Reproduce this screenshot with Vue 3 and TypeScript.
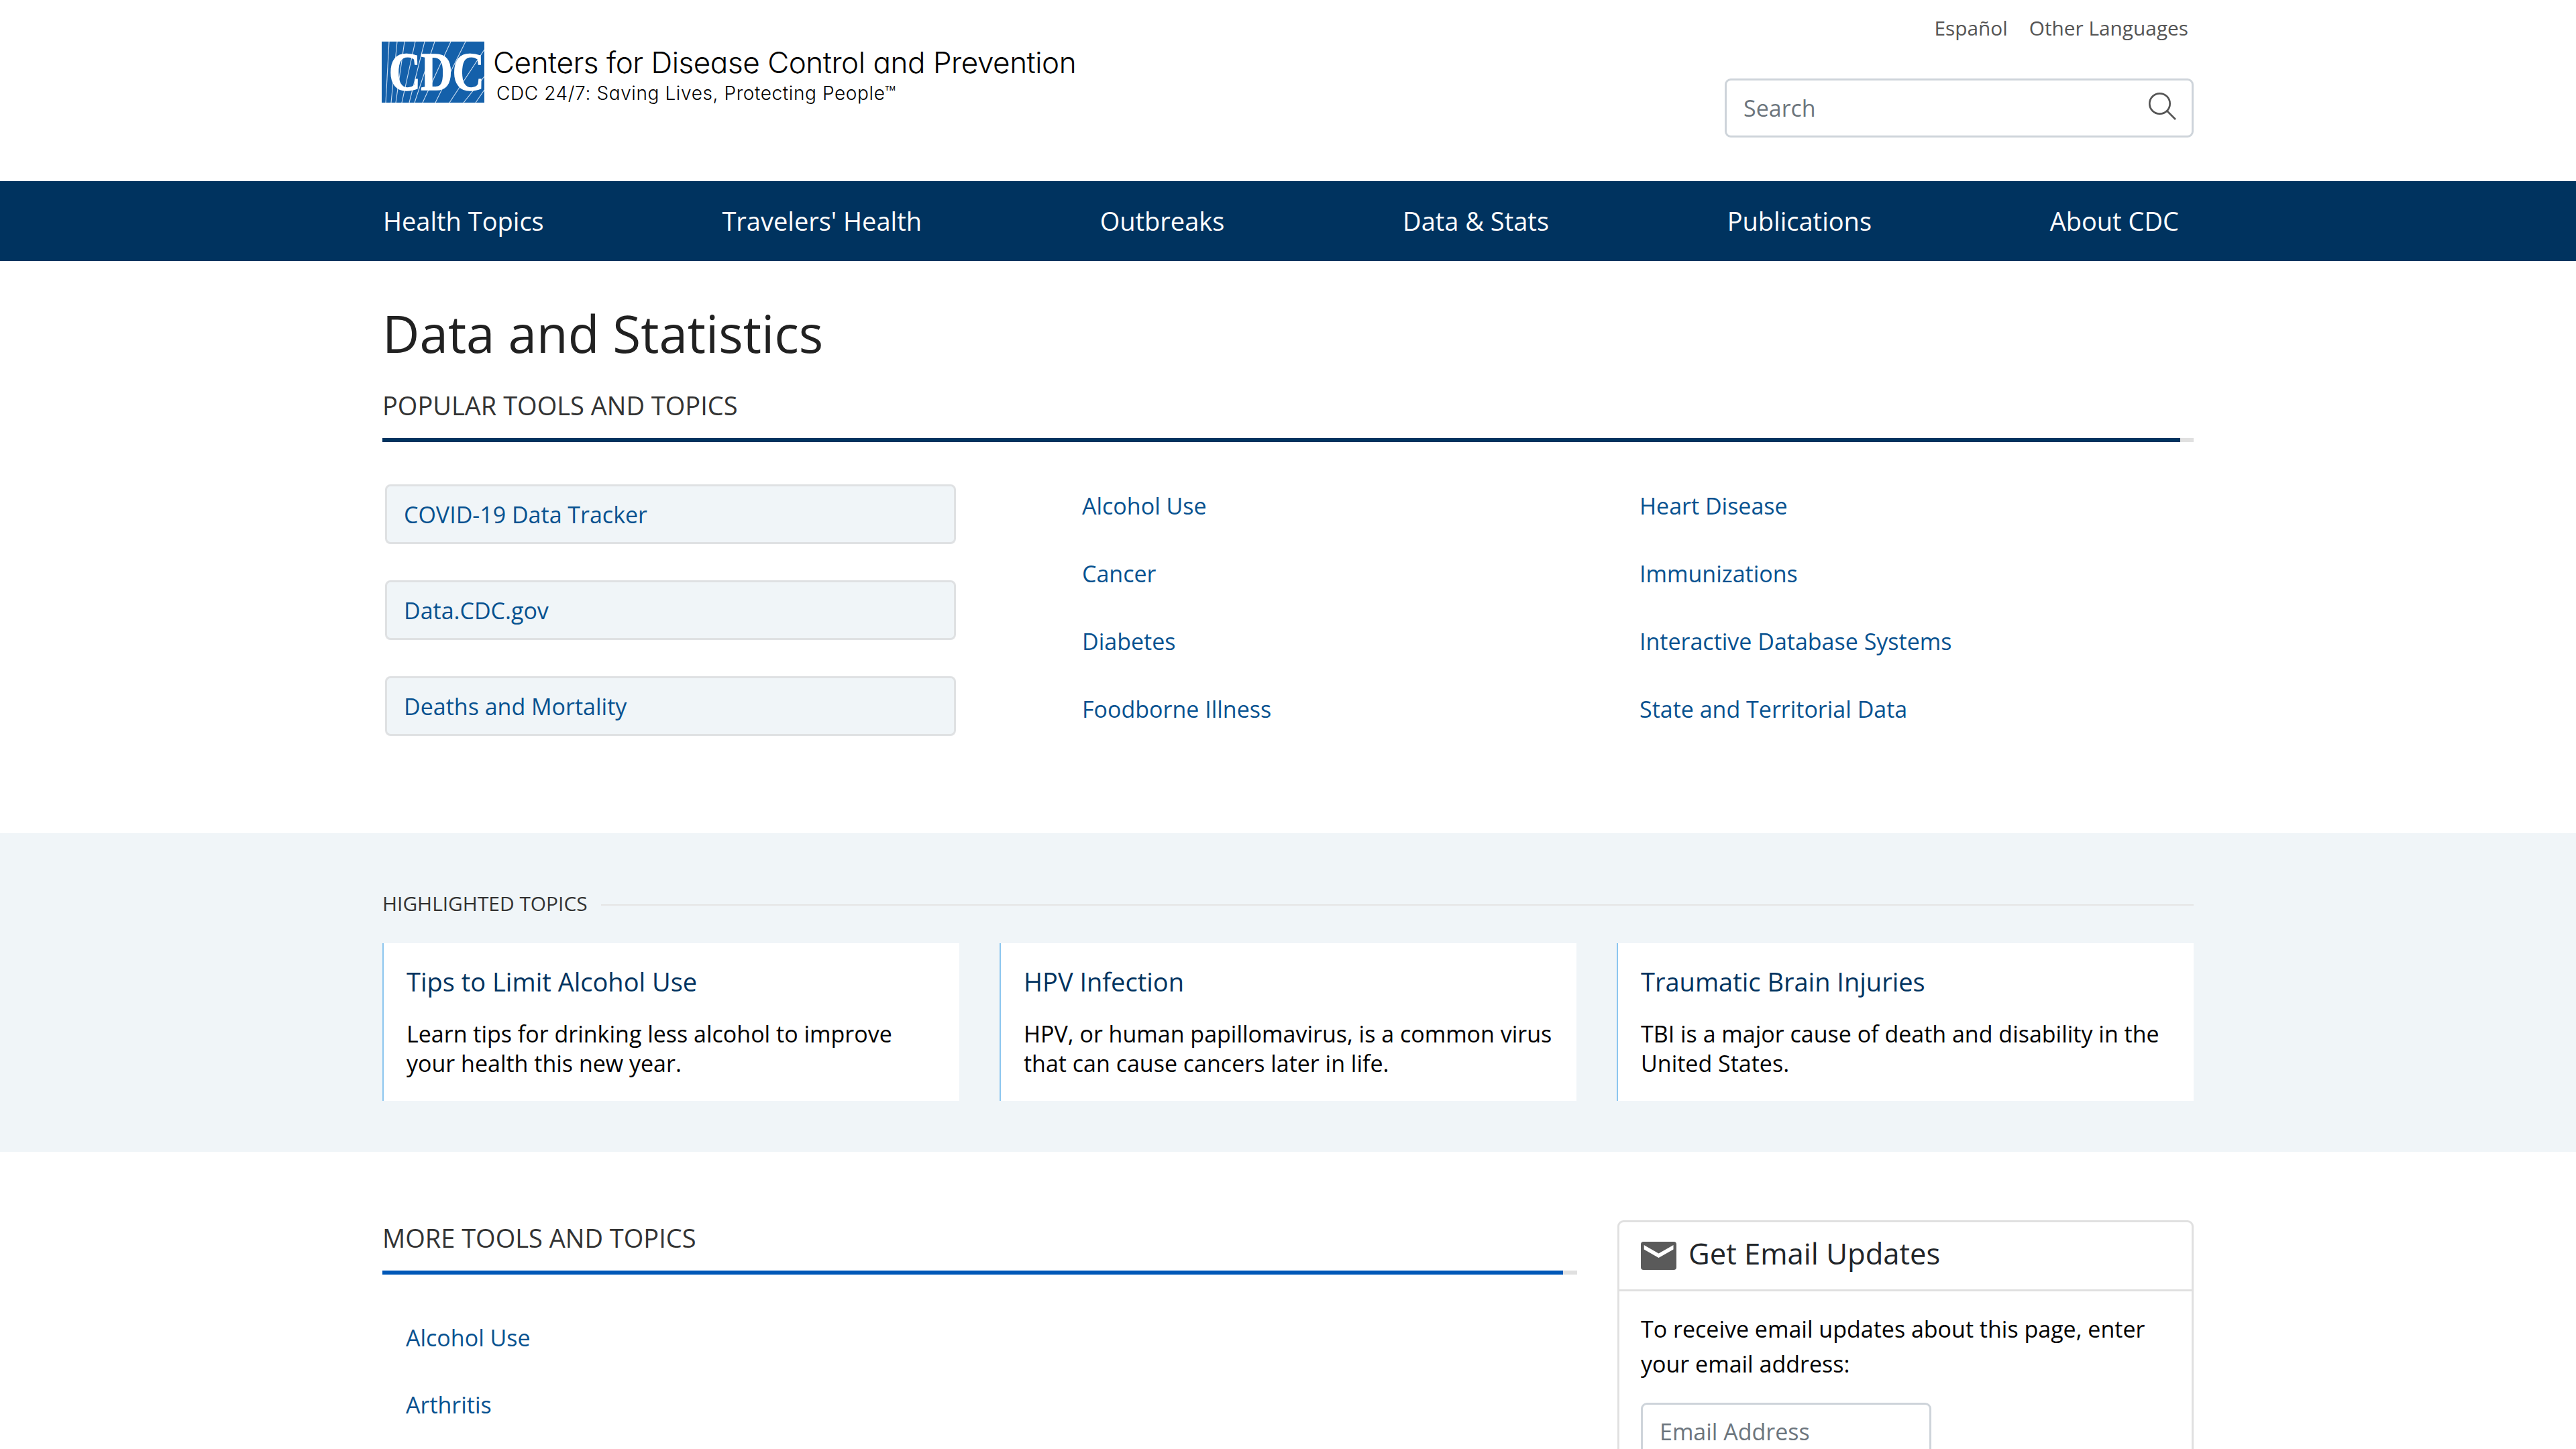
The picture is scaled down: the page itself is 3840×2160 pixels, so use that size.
<script setup lang="ts">
const navItems: string[] = ['Health Topics', "Travelers' Health", 'Outbreaks', 'Data & Stats', 'Publications', 'About CDC']
const pills: string[] = ['COVID-19 Data Tracker', 'Data.CDC.gov', 'Deaths and Mortality']
const colA: string[] = ['Alcohol Use', 'Cancer', 'Diabetes', 'Foodborne Illness']
const colB: string[] = ['Heart Disease', 'Immunizations', 'Interactive Database Systems', 'State and Territorial Data']
const cards = [
  { title: 'Tips to Limit Alcohol Use', text: 'Learn tips for drinking less alcohol to improve your health this new year.' },
  { title: 'HPV Infection', text: 'HPV, or human papillomavirus, is a common virus that can cause cancers later in life.' },
  { title: 'Traumatic Brain Injuries', text: 'TBI is a major cause of death and disability in the United States.' },
]
const moreLinks: string[] = ['Alcohol Use', 'Arthritis']
const rays: number[][] = [
  [6, 91, 11, 0], [14, 91, 23, 0], [21, 91, 34, 0], [30, 91, 50, 0], [41, 91, 64, 0], [49, 91, 79, 0],
  [61, 91, 103, 0], [80, 91, 125, 0], [101, 91, 153, 12], [122, 91, 153, 52], [140, 91, 153, 72],
]
</script>

<template>
  <div class="page">
    <header class="masthead">
      <div class="wrap head-row">
        <div class="logo">
          <div class="mark">
            <svg viewBox="0 0 153 91" width="153" height="91">
              <rect width="153" height="91" fill="#1460aa" />
              <line v-for="(r, i) in rays" :key="i" :x1="r[0]" :y1="r[1]" :x2="r[2]" :y2="r[3]" stroke="#cfe0f2" stroke-width="1.1" />
            </svg>
            <span class="mark-text">CDC</span>
          </div>
          <div class="logo-text">
            <div class="logo-title">Centers for Disease Control and Prevention</div>
            <div class="logo-sub">CDC 24/7: Saving Lives, Protecting People™</div>
          </div>
        </div>
        <div class="head-right">
          <div class="lang">
            <a>Español</a>
            <a>Other Languages</a>
          </div>
          <div class="search">
            <span>Search</span>
            <svg width="46" height="46" viewBox="0 0 46 46" fill="none" stroke="#555" stroke-width="2.7">
              <circle cx="19.5" cy="19.5" r="15.2" />
              <line x1="30.5" y1="30.5" x2="43" y2="43" />
            </svg>
          </div>
        </div>
      </div>
    </header>

    <nav class="nav">
      <div class="wrap nav-row">
        <a v-for="n in navItems" :key="n">{{ n }}</a>
      </div>
    </nav>

    <main>
      <section class="wrap top">
        <h1>Data and Statistics</h1>
        <h2 class="rule-title dark">POPULAR TOOLS AND TOPICS</h2>
        <div class="popular">
          <div class="pills">
            <a v-for="p in pills" :key="p" class="pill">{{ p }}</a>
          </div>
          <ul class="links">
            <li v-for="l in colA" :key="l"><a>{{ l }}</a></li>
          </ul>
          <ul class="links">
            <li v-for="l in colB" :key="l"><a>{{ l }}</a></li>
          </ul>
        </div>
      </section>

      <section class="band">
        <div class="wrap">
          <div class="band-title"><span>HIGHLIGHTED TOPICS</span><i></i></div>
          <div class="cards">
            <article v-for="c in cards" :key="c.title" class="card">
              <h3>{{ c.title }}</h3>
              <p>{{ c.text }}</p>
            </article>
          </div>
        </div>
      </section>

      <section class="wrap lower">
        <div class="more">
          <h2 class="rule-title blue">MORE TOOLS AND TOPICS</h2>
          <ul class="more-links">
            <li v-for="l in moreLinks" :key="l"><a>{{ l }}</a></li>
          </ul>
        </div>
        <aside class="email">
          <div class="email-head">
            <svg width="53" height="42" viewBox="0 0 53 42">
              <rect width="53" height="42" rx="4" fill="#5a5a5a" />
              <path d="M4.7 5 L26.5 17.6 L48.5 5 L48.5 11.6 L26.5 24 L4.7 11.6 Z" fill="#fff" />
            </svg>
            <span>Get Email Updates</span>
          </div>
          <div class="email-body">
            <p>To receive email updates about this page, enter your email address:</p>
            <div class="email-input">Email Address</div>
          </div>
        </aside>
      </section>
    </main>
  </div>
</template>

<style>
html, body { margin: 0; background: #fff; overflow: hidden; }
</style>

<style scoped>
.page {
  height: 2160px;
  overflow: hidden;
  font-family: "Open Sans", sans-serif;
  color: #212529;
  font-size: 34px;
  background: #fff;
}
.wrap { width: 2700px; margin: 0 auto; }
a { text-decoration: none; color: #075290; }
ul { list-style: none; margin: 0; padding: 0; }

.masthead { height: 270px; box-sizing: border-box; }
.head-row { display: flex; justify-content: space-between; align-items: flex-start; }
.logo { display: flex; margin-top: 62px; margin-left: -1px; }
.mark { position: relative; flex: none; width: 153px; height: 91px; }
.mark svg { display: block; }
.mark-text {
  position: absolute; left: -3px; top: 0; width: 153px; text-align: center;
  font-family: "Liberation Serif", serif; font-weight: 700; font-size: 80px; line-height: 91px; color: #fff;
  transform: scaleX(0.82); transform-origin: center; -webkit-text-stroke: 1.5px #fff;
}
.logo-text { margin-left: 13px; color: #000; font-family: Inter, "Liberation Sans", sans-serif; font-weight: 300; font-feature-settings: "cv11" 1; }
.logo-title { font-size: 44px; line-height: 50px; margin-top: 6px; letter-spacing: -0.45px; white-space: nowrap; }
.logo-sub { font-size: 28px; line-height: 34px; margin-top: 4px; margin-left: 5px; letter-spacing: 0.6px; white-space: nowrap; }

.head-right { width: 699px; }
.lang { display: flex; justify-content: flex-end; gap: 32px; padding: 20px 8px 0 0; font-size: 29.8px; line-height: 44px; }
.lang a { color: #555; }
.search {
  margin-top: 53px; height: 88px; box-sizing: border-box; border: 3px solid #ced4da; border-radius: 9px;
  display: flex; align-items: center; justify-content: space-between; padding: 0 21px 0 25px;
  color: #6c757d; font-size: 34px;
}
.search svg { margin-top: -6px; }

.nav { background: #00335f; height: 119px; }
.nav-row { height: 100%; display: flex; justify-content: space-between; align-items: center; padding: 0 22px 2px 1px; box-sizing: border-box; }
.nav-row a { color: #fff; font-size: 38px; }

h1 { font-size: 76.4px; font-weight: 400; line-height: 94px; margin: 0; padding-top: 60px; color: #212121; }
.rule-title { font-size: 38px; font-weight: 400; margin: 0; line-height: 54px; color: #333; }
.rule-title::after { content: ""; display: block; margin-top: 22px; height: 6px; background: linear-gradient(to right, var(--c) calc(100% - var(--tail)), #e0e0e0 calc(100% - var(--tail))); }
.rule-title.dark { --c: #00335f; --tail: 20px; margin-top: 34px; }
.rule-title.blue { --c: #0057b7; --tail: 21px; }

.popular { display: grid; grid-template-columns: 1043px 831px 1fr; margin-top: 63px; }
.pills { display: flex; flex-direction: column; gap: 54px; padding-left: 4px; }
.pill {
  width: 851px; height: 89px; box-sizing: border-box; background: #f0f5f8; border: 3px solid #dfe1e3; border-radius: 8px;
  display: flex; align-items: center; padding: 0 0 0 25px; color: #075290;
}
.links { display: flex; flex-direction: column; gap: 53px; padding-top: 8px; }
.links li { line-height: 48px; }

.band { background: #f0f5f8; height: 475px; margin-top: 145px; padding-top: 85px; box-sizing: border-box; }
.band-title { display: flex; align-items: center; gap: 20px; font-size: 29.9px; line-height: 40px; color: #333; }
.band-title i { flex: 1; height: 2px; background: #e5e5e5; margin-top: 3px; }
.cards { display: grid; grid-template-columns: repeat(3, 860px); gap: 60px; margin-top: 39px; }
.card { background: #fff; height: 235px; box-sizing: border-box; border-left: 2px solid #8cc6ef; padding: 30px 30px 0 34px; }
.card h3 { margin: 0; font-size: 38px; font-weight: 400; line-height: 54px; color: #00335f; }
.card p { margin: 29px 0 0; font-size: 34px; line-height: 44px; color: #000; }

.lower { display: grid; grid-template-columns: 1781px 859px; gap: 60px; padding-top: 102px; }
.more .rule-title { margin-top: -1px; }
.more-links { padding: 0 0 0 35px; margin-top: 70px; display: flex; flex-direction: column; gap: 52px; }
.more-links li { line-height: 48px; }

.email { border: 3px solid #e0e0e0; border-radius: 9px; height: 600px; }
.email-head { height: 100px; border-bottom: 3px solid #e0e0e0; display: flex; align-items: center; padding-left: 32px; gap: 18px; font-size: 43.6px; color: #212529; }
.email-head span { margin-top: -9px; }
.email-body { padding: 30px 32px; }
.email-body p { margin: 0; line-height: 52px; color: #000; }
.email-input {
  margin-top: 32px; width: 433px; height: 88px; box-sizing: border-box; border: 3px solid #ced4da; border-radius: 9px;
  padding: 16px 25px; color: #6c757d; line-height: 48px;
}
</style>
